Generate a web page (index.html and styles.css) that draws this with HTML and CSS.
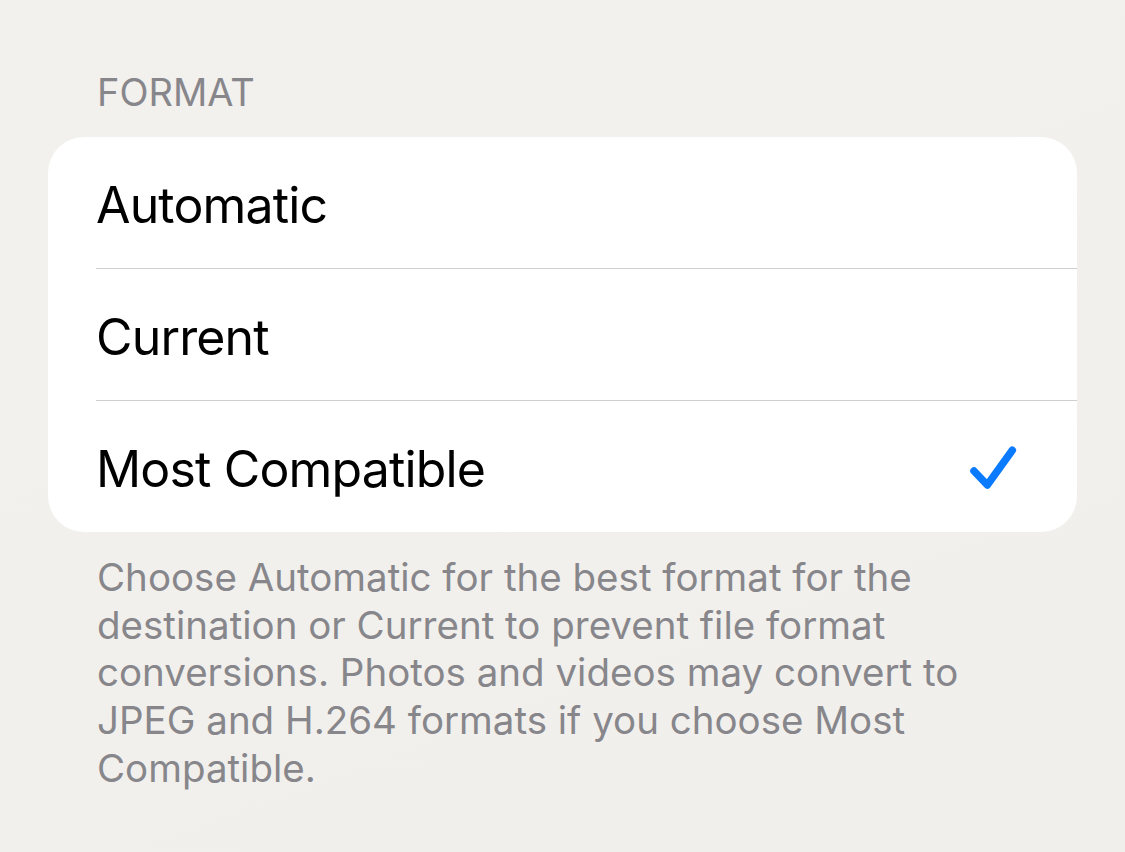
FILE: index.html
```html
<!DOCTYPE html>
<html>
<head>
<meta charset="utf-8">
<link rel="stylesheet" href="styles.css">
</head>
<body>
<div class="page">
  <div class="section-header">FORMAT</div>
  <div class="card">
    <div class="row"><span class="label">Automatic</span></div>
    <div class="row"><span class="label">Current</span></div>
    <div class="row"><span class="label">Most Compatible</span>
      <svg class="check" width="52" height="52" viewBox="0 0 52 52"><path d="M8 30 L21.3 44 L46.3 9.3" fill="none" stroke="#0a7aff" stroke-width="7.5" stroke-linecap="round" stroke-linejoin="round"/></svg>
    </div>
  </div>
  <div class="footer">Choose Automatic for the best format for the destination or Current to prevent file format conversions. Photos and videos may convert to JPEG and H.264 formats if you choose Most Compatible.</div>
</div>
</body>
</html>
```
FILE: styles.css
```css
html, body {
  margin: 0;
  padding: 0;
}
body {
  background: linear-gradient(160deg, #f3f1ee 0%, #f2f0ed 50%, #f1efec 100%);
  font-family: Inter, "Noto Sans", sans-serif;
  width: 1125px;
  height: 852px;
  overflow: hidden;
}
.page {
  padding: 70px 48px 0 48px;
  width: 1029px;
}
.section-header {
  color: #87868b;
  font-size: 38px;
  line-height: 44px;
  padding-left: 49px;
  margin-bottom: 23px;
}
.card {
  background: #ffffff;
  border-radius: 36px;
  overflow: hidden;
}
.row {
  height: 132px;
  margin-left: 48px;
  padding-right: 59px;
  display: flex;
  align-items: center;
  justify-content: space-between;
  border-bottom: 1px solid #cfcfd2;
  box-sizing: border-box;
}
.row:last-child {
  border-bottom: none;
  height: 131px;
}
.label {
  font-size: 50px;
  color: #000;
  letter-spacing: -0.85px;
  padding-top: 4px;
}
.check {
  display: block;
}
.footer {
  color: #87868b;
  font-size: 38.5px;
  line-height: 47.7px;
  padding: 22px 90px 0 49px;
}
```
